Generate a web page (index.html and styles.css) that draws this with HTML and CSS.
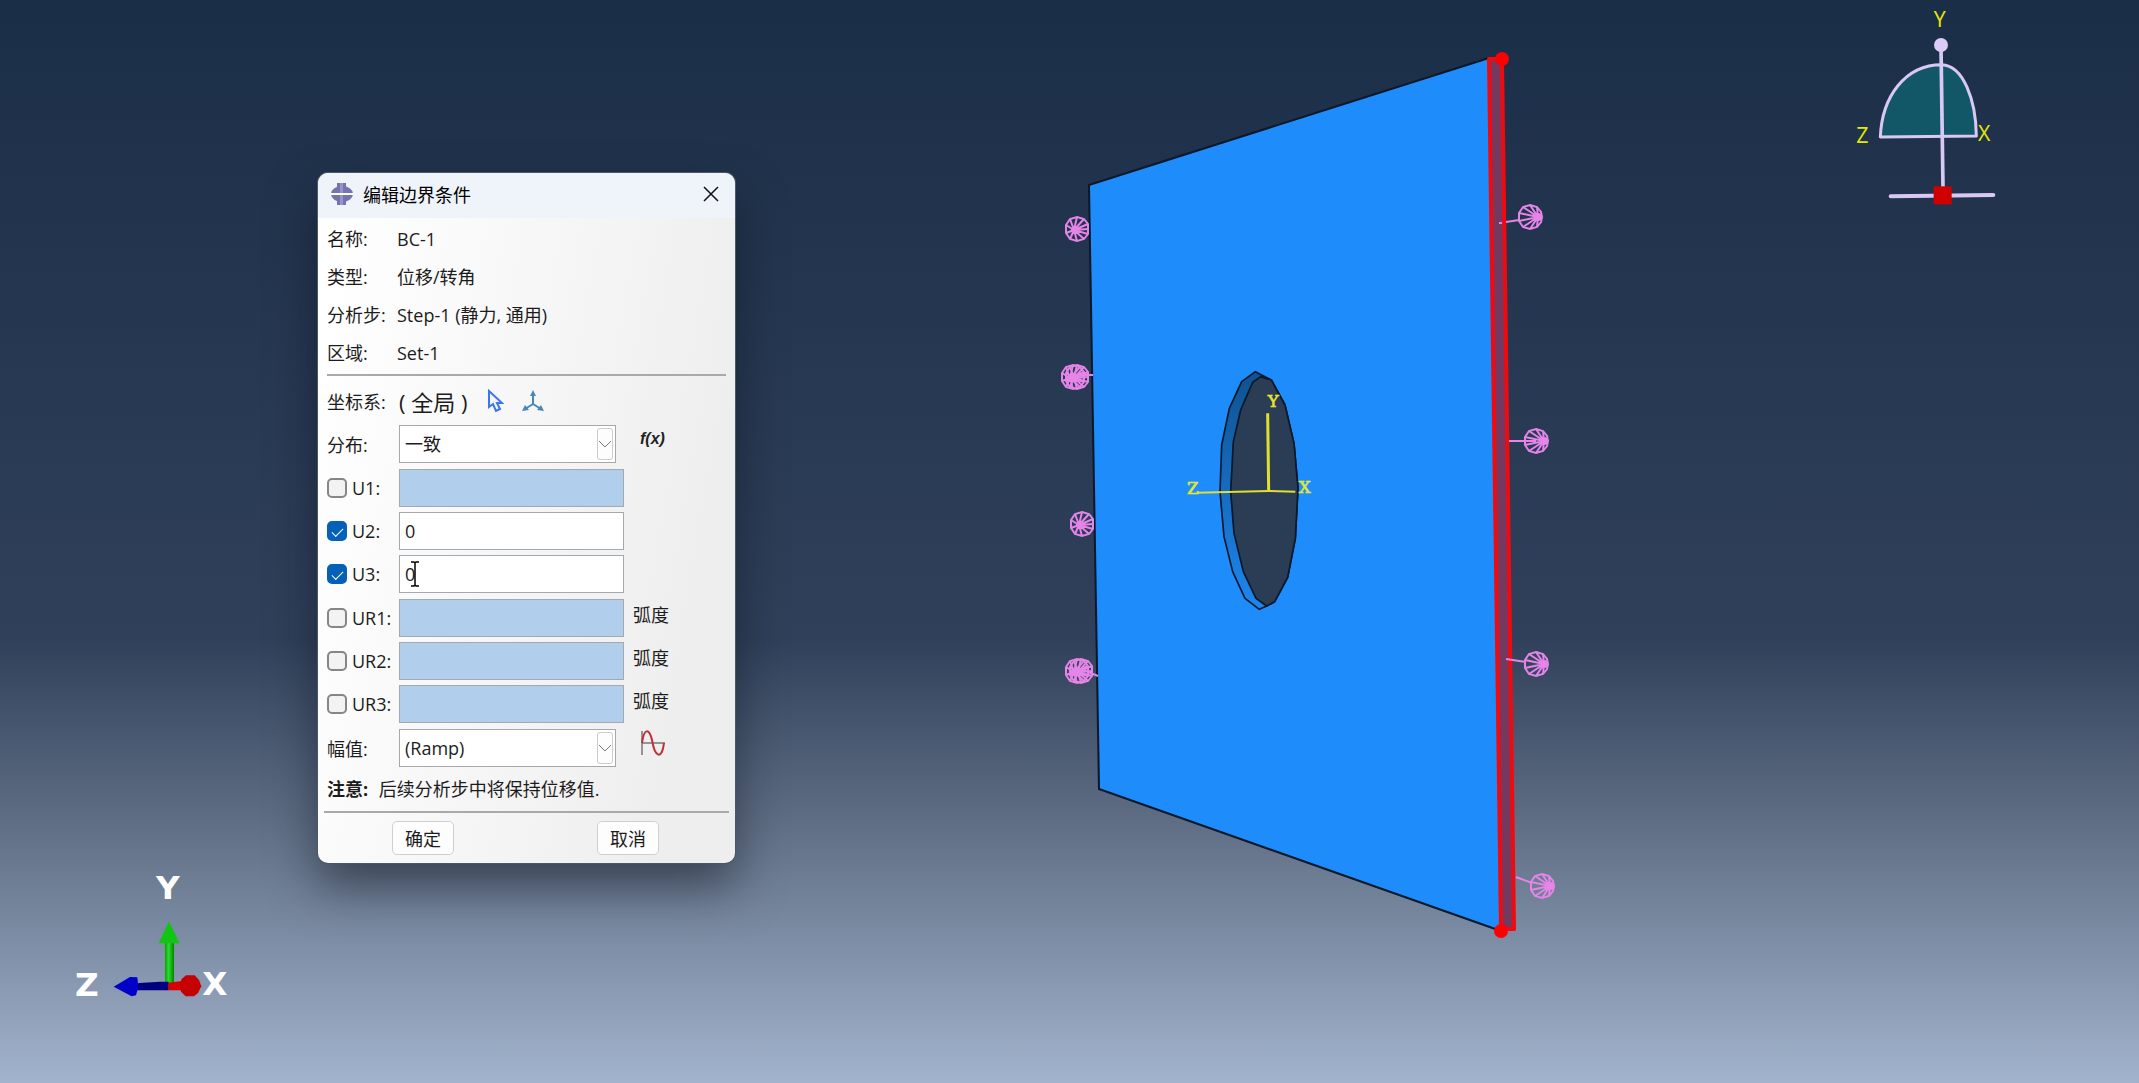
FILE: index.html
```
<!DOCTYPE html>
<html lang="zh-CN">
  <head>
    <meta charset="UTF-8" />
    <meta name="viewport" content="width=device-width, initial-scale=1.0" />
    <title>编辑边界条件</title>
    <link rel="stylesheet" href="styles.css">
  </head>
  <body>
    <main class="viewport">
      <svg class="scene" viewBox="0 0 2139 1083" preserveAspectRatio="xMidYMid slice">
        <defs>
          <linearGradient id="rim" x1="0" y1="0" x2="0" y2="1">
            <stop offset="0" stop-color="#10528f" />
            <stop offset="1" stop-color="#1d86f0" />
          </linearGradient>
          <linearGradient id="shaftY">
            <stop offset="0" stop-color="#00a800" />
            <stop offset="0.4" stop-color="#2fd92f" />
            <stop offset="1" stop-color="#008500" />
          </linearGradient>
          <g id="cone">
            <path d="M0-12 7-10 11-5 12 0 11 5 7 10 0 12-7 10-11 4-11-4-7-10Z" />
            <path d="M8 0 0-12M8 0-7-10M8 0-11-4M8 0-11 4M8 0-7 10M8 0 0 12M8 0 7 10M8 0 7-10" />
            <circle class="tip" cx="8" cy="0" r="3" />
          </g>
          <g id="wheel">
            <path d="M0-12 7-10 11-5 11 5 7 10 0 12-7 10-11 4-11-4-7-10Z" />
            <path d="M-3 1 0-12M-3 1 7-10M-3 1 11-5M-3 1 11 0M-3 1 11 5M-3 1 7 10M-3 1 0 12M-3 1-7 10M-3 1-11 4M-3 1-11-4M-3 1-7-10" />
            <circle class="tip" cx="-3" cy="1" r="2" />
          </g>
        </defs>

        <!-- plate -->
        <path class="plate" d="M1089 185 1489 58 1501 931 1099 789Z" />
        <path class="edge" d="M1489 58 1089 185 1099 789 1501 931" />

        <!-- hole -->
        <svg x="1170" y="350" width="180" height="280" viewBox="0 0 540 840">
          <path class="rim" d="M256 65 304 90 345 165 372 280 384 415 376 565 353 682 314 755 290 768 268 778 225 745 188 665 162 560 150 425 155 285 178 175 215 95Z" />
          <path class="hole" d="M272 80 304 90 345 165 372 280 384 415 376 565 353 682 314 755 290 768 258 745 220 665 192 550 182 425 190 275 212 180 248 97Z" />
          <path class="axis-main" d="M293 190 296 424" />
          <path class="axis-side" d="M82 428 296 423 376 425" />
          <text class="axis-label" x="293" y="171">Y</text>
          <text class="axis-label" x="51" y="431">Z</text>
          <text class="axis-label" x="386" y="428">X</text>
        </svg>

        <!-- selected face -->
        <path class="face" d="M1489 59H1502L1514 929H1501Z" />
        <circle class="vertex" cx="1502" cy="59" r="7" />
        <circle class="vertex" cx="1501" cy="931" r="7" />

        <!-- boundary condition markers -->
        <g class="bc">
          <use href="#wheel" x="1077" y="229" />
          <use href="#wheel" x="1073" y="377" />
          <use href="#wheel" x="1077" y="377" />
          <path d="M1080 375H1093" />
          <use href="#wheel" x="1082" y="524" />
          <use href="#wheel" x="1077" y="671" />
          <use href="#wheel" x="1081" y="671" />
          <path d="M1088 672 1098 676" />
          <use href="#cone" x="1530" y="217" />
          <path d="M1499 223H1502M1506 222 1519 220" />
          <use href="#cone" x="1536" y="441" />
          <path d="M1509 441H1536" />
          <use href="#cone" x="1536" y="664" />
          <path d="M1506 659 1526 662" />
          <use href="#cone" x="1542" y="886" />
          <path d="M1516 877 1532 883" />
        </g>

        <!-- view compass -->
        <svg x="1820" y="0" width="220" height="220" viewBox="0 0 660 660">
          <path class="dome" d="M181 411C186 290 255 194 365 194C430 196 468 300 469 408Z" />
          <path class="stem" d="M363 140 369 565" />
          <path class="base" d="M212 589 520 585" />
          <circle class="knob" cx="363" cy="135" r="21" />
          <rect class="pivot" x="341" y="559" width="54" height="54" />
          <text class="compass-label" x="341" y="82">Y</text>
          <text class="compass-label" x="109" y="429">Z</text>
          <text class="compass-label" x="474" y="423">X</text>
        </svg>

        <!-- coordinate triad -->
        <svg x="50" y="860" width="200" height="160" viewBox="0 0 600 480">
          <path fill="url(#shaftY)" d="M345 245H372V370H345Z" />
          <path fill="#12c512" d="M357 184 389 250H326Z" />
          <path fill="#00007e" d="M255 370 330 365H356V391H255Z" />
          <path fill="#0000c8" d="M191 380 240 351 262 352 265 380 258 406 245 409Z" />
          <path fill="#d80000" d="M355 368 395 363V391H355Z" />
          <path fill="#c40000" d="M408 346H434L447 360 454 379 444 399 432 409H407L393 395 389 375 395 357Z" />
          <text class="triad-label" x="318" y="117">Y</text>
          <text class="triad-label" x="75" y="409">Z</text>
          <text class="triad-label" x="457" y="405">X</text>
        </svg>
      </svg>

      <form class="dialog">
        <header class="title-bar">
          <svg class="app-icon" viewBox="0 0 22 22">
            <ellipse fill="#7674b0" cx="11" cy="11" rx="11" ry="8" />
            <path fill="#7674b0" d="M6 0H15V22H6Z" />
            <path fill="#9795c6" d="M9 0H12V22H9Z" />
            <path fill="#ffffff" d="M0 10H22V12H0Z" />
          </svg>
          <h1>编辑边界条件</h1>
          <button type="button" class="close" aria-label="关闭">
            <svg viewBox="0 0 16 16"><path d="M1 1 15 15M15 1 1 15" /></svg>
          </button>
        </header>

        <div class="content">
          <dl class="info">
            <dt>名称:</dt><dd>BC-1</dd>
            <dt>类型:</dt><dd>位移/转角</dd>
            <dt>分析步:</dt><dd>Step-1 (静力, 通用)</dd>
            <dt>区域:</dt><dd>Set-1</dd>
          </dl>

          <div class="csys">
            <span class="label">坐标系:</span>
            <span class="csys-name">( 全局 )</span>
            <button type="button" class="tool" aria-label="选择坐标系">
              <svg class="pick" viewBox="0 0 17 24"><path d="M2 2V18L6 15 9 22 13 20 10 14H15Z" /></svg>
            </button>
            <button type="button" class="tool" aria-label="创建坐标系">
              <svg class="triad" viewBox="0 0 22 22">
                <path class="arm" d="M11 4V14L3 19M11 14 19 19" />
                <path class="head" d="M11 0 14 6H8ZM0 21 3 15 7 20ZM22 21 19 15 15 20Z" />
              </svg>
            </button>
          </div>

          <div class="fields">
            <div class="row">
              <label class="label" for="dist">分布:</label>
              <div class="combo">
                <select id="dist"><option>一致</option></select>
                <span class="arrow"><svg viewBox="0 0 14 8"><path d="M1 1 7 7 13 1" /></svg></span>
              </div>
              <button type="button" class="tool side fx" aria-label="创建表达式场">f(x)</button>
            </div>

            <div class="group">
              <div class="row">
                <label class="label"><input type="checkbox" />U1:</label>
                <input type="text" aria-label="U1" disabled />
              </div>
              <div class="row">
                <label class="label"><input type="checkbox" checked />U2:</label>
                <input type="text" aria-label="U2" value="0" />
              </div>
              <div class="row">
                <label class="label"><input type="checkbox" checked />U3:</label>
                <div class="editing">
                  <input type="text" aria-label="U3" value="0" />
                  <svg class="ibeam" viewBox="0 0 8 26"><path d="M0 1H3L4 2 5 1H8M4 2V24M0 25H3L4 24 5 25H8" /></svg>
                </div>
              </div>
            </div>

            <div class="group">
              <div class="row">
                <label class="label"><input type="checkbox" />UR1:</label>
                <input type="text" aria-label="UR1" disabled />
                <span class="unit">弧度</span>
              </div>
              <div class="row">
                <label class="label"><input type="checkbox" />UR2:</label>
                <input type="text" aria-label="UR2" disabled />
                <span class="unit">弧度</span>
              </div>
              <div class="row">
                <label class="label"><input type="checkbox" />UR3:</label>
                <input type="text" aria-label="UR3" disabled />
                <span class="unit">弧度</span>
              </div>
            </div>

            <div class="row">
              <label class="label" for="amp">幅值:</label>
              <div class="combo">
                <select id="amp"><option>(Ramp)</option></select>
                <span class="arrow"><svg viewBox="0 0 14 8"><path d="M1 1 7 7 13 1" /></svg></span>
              </div>
              <button type="button" class="tool side" aria-label="创建幅值">
                <svg class="wave" viewBox="0 0 26 26">
                  <path class="axes" d="M2 1V25M2 13H25" />
                  <path class="curve" d="M2 13C4-2 9-2 12 10C15 28 22 30 24 13" />
                </svg>
              </button>
            </div>
          </div>

          <p class="note"><strong>注意:</strong> 后续分析步中将保持位移值.</p>
        </div>

        <footer class="actions">
          <button type="submit">确定</button>
          <button type="button">取消</button>
        </footer>
      </form>
    </main>
  </body>
</html>
```

FILE: styles.css
```
* {
  box-sizing: border-box;
}

body {
  margin: 0;
  font-family: "Open Sans", "Noto Sans CJK SC", sans-serif;
  font-size: 18px;
  color: #1c1c1c;
}

button,
input,
select {
  font: inherit;
  color: inherit;
}

.viewport {
  position: relative;
  height: 100vh;
  overflow: hidden;
  background: linear-gradient(#1b2e47 0%, #30405a 59%, #5f6e84 76%, #a2b3cd 100%);
}

/* 3D scene */
.scene {
  display: block;
  width: 100%;
  height: 100%;
}

.plate {
  fill: #1e8cfb;
}

.edge {
  fill: none;
  stroke: #07182b;
  stroke-width: 2;
}

.rim,
.hole {
  stroke: #07182b;
  stroke-width: 5;
  stroke-linejoin: round;
}

.rim {
  fill: url(#rim);
}

.hole {
  fill: #2b3c55;
}

.axis-main,
.axis-side {
  fill: none;
  stroke: #e0e030;
  stroke-width: 9;
}

.axis-side {
  stroke-width: 6;
}

.axis-label {
  font: 50px "DejaVu Serif", serif;
  fill: #e6e62e;
  stroke: #e6e62e;
  stroke-width: 2;
}

.face {
  fill: #75395f;
  stroke: #f00a10;
  stroke-width: 4;
  stroke-linejoin: round;
}

.vertex {
  fill: #ff0000;
}

.bc {
  fill: none;
  stroke: #e585e8;
  stroke-width: 2;
}

.tip {
  fill: #ee82ee;
}

.dome {
  fill: #115767;
}

.dome,
.stem,
.base {
  stroke: #d9c8f4;
  stroke-width: 9;
  stroke-linejoin: round;
}

.stem {
  stroke-width: 11;
}

.base {
  stroke-width: 12;
  stroke-linecap: round;
}

.knob {
  fill: #dccbf8;
}

.pivot {
  fill: #d00000;
}

.compass-label {
  font: 64px "Open Sans", sans-serif;
  fill: #e8e800;
}

.triad-label {
  font: bold 98px "DejaVu Sans", sans-serif;
  fill: #ffffff;
}

/* dialog window */
.dialog {
  position: absolute;
  top: 173px;
  left: 318px;
  width: 417px;
  border-radius: 10px;
  background: linear-gradient(100deg, #ffffff 5%, #eeeeee 85%);
  box-shadow: 0 0 0 1px #4d5866, 0 24px 48px rgba(10, 16, 26, 0.5);
  overflow: hidden;
}

.title-bar {
  display: flex;
  align-items: center;
  height: 45px;
  padding: 0 16px 3px 13px;
  background-color: #eff3fa;
}

.title-bar h1 {
  flex: 1;
  margin: 0 0 0 10px;
  font-size: 18px;
  font-weight: 400;
  color: #000000;
}

.app-icon {
  width: 22px;
  height: 22px;
}

.close {
  display: flex;
  padding: 0;
  border: none;
  background: none;
}

.close svg {
  width: 16px;
  height: 16px;
  fill: none;
  stroke: #111111;
  stroke-width: 1.5;
}

.content {
  margin: 0 6px;
  padding: 2px 3px 10px;
  border-bottom: 2px solid #a9a9a9;
}

.info {
  display: grid;
  grid-template-columns: 70px 1fr;
  margin: 0;
  padding-bottom: 2px;
  line-height: 38px;
  border-bottom: 2px solid #a9a9a9;
}

.info dd {
  margin: 0;
}

.csys {
  display: flex;
  align-items: center;
  height: 49px;
}

.label {
  display: flex;
  align-items: center;
  flex: none;
  width: 72px;
  white-space: nowrap;
}

.csys-name {
  width: 88px;
  font-size: 22px;
}

.tool {
  display: flex;
  align-items: center;
  padding: 0;
  border: none;
  background: none;
}

.pick {
  width: 17px;
  height: 24px;
  margin-right: 18px;
  fill: #f2f6ff;
  stroke: #3d74f2;
  stroke-width: 2;
}

.triad {
  width: 22px;
  height: 22px;
}

.arm {
  fill: none;
  stroke: #4a86b8;
  stroke-width: 2;
}

.head {
  fill: #4a86b8;
}

.fields {
  display: flex;
  flex-direction: column;
  gap: 6px;
}

.group {
  display: flex;
  flex-direction: column;
  gap: 5px;
}

.row {
  display: flex;
  height: 38px;
}

input[type="text"],
select {
  width: 225px;
  height: 38px;
  padding: 0 5px;
  border: 1px solid #a4a9af;
  border-radius: 0;
  outline: none;
  background-color: #ffffff;
}

input[type="text"]:disabled {
  background-color: #b1ceed;
}

input[type="checkbox"] {
  appearance: none;
  width: 20px;
  height: 20px;
  margin: 0 5px 0 0;
  border: 2px solid #868686;
  border-radius: 5px;
  background-color: #f3f3f3;
}

input[type="checkbox"]:checked {
  display: grid;
  place-items: center;
  border-color: #0560b8;
  background-color: #0560b8;
}

input[type="checkbox"]:checked::before {
  content: "";
  width: 10px;
  height: 5px;
  border-left: 1px solid #ffffff;
  border-bottom: 1px solid #ffffff;
  transform: rotate(-45deg);
}

.combo,
.editing {
  position: relative;
}

.combo select {
  display: block;
  appearance: none;
  width: 217px;
}

.arrow {
  position: absolute;
  top: 3px;
  right: 3px;
  display: grid;
  place-items: center;
  width: 16px;
  height: 32px;
  border: 1px solid #cccccc;
  border-radius: 3px;
  background-color: #fdfdfd;
  pointer-events: none;
}

.arrow svg {
  width: 14px;
  height: 8px;
  fill: none;
  stroke: #777777;
}

.ibeam {
  position: absolute;
  top: 6px;
  left: 12px;
  width: 8px;
  height: 26px;
  fill: none;
  stroke: #000000;
  stroke-width: 1.5;
}

.unit {
  margin-left: 9px;
  line-height: 32px;
}

.side {
  height: 28px;
  margin-left: 24px;
}

.fx {
  font: italic bold 16px "Liberation Sans", sans-serif;
  color: #222222;
}

.wave {
  width: 26px;
  height: 26px;
  fill: none;
}

.axes {
  stroke: #777777;
  stroke-width: 1.5;
}

.curve {
  stroke: #bf2f38;
  stroke-width: 2;
}

.note {
  margin: 10px 0 0;
  line-height: 24px;
}

.note strong {
  margin-right: 6px;
}

.actions {
  display: flex;
  gap: 143px;
  padding: 8px 74px;
}

.actions button {
  width: 62px;
  height: 34px;
  padding: 0;
  border: 1px solid #cfcfcf;
  border-radius: 5px;
  background-color: #fdfdfd;
}
```
